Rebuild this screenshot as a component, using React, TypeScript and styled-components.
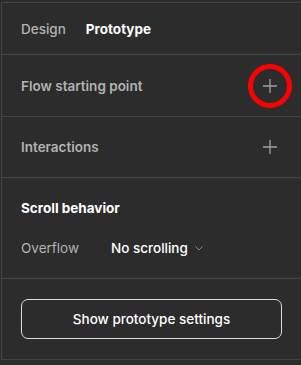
import React from 'react';
import styled, {createGlobalStyle} from 'styled-components';

const COLOR = {
    BG: '#2c2c2c',
    BORDER: '#444444',
    TEXT: '#ffffff',
    MUTED: '#b3b3b3',
    ICON: '#a0a0a0',
};

const GlobalStyle = createGlobalStyle`
    html, body {
        margin: 0;
        padding: 0;
        background: ${COLOR.BG};
    }
    body {
        font-family: Inter, "Noto Sans", sans-serif;
        -webkit-font-smoothing: antialiased;
    }
`;

const Panel = styled.div`
    width: 300px;
    margin: 2px 0 0 1px;
    border-top: 1px solid ${COLOR.BORDER};
    border-left: 1px solid ${COLOR.BORDER};
    background: ${COLOR.BG};
    color: ${COLOR.TEXT};
    font-size: 13.5px;
`;

const Tabs = styled.div`
    display: flex;
    gap: 20px;
    height: 51px;
    padding: 0 19px;
    align-items: center;
    border-bottom: 1px solid ${COLOR.BORDER};
`;

const Tab = styled.span<{ $active?: boolean }>`
    font-weight: ${p => (p.$active ? 700 : 500)};
    color: ${p => (p.$active ? COLOR.TEXT : COLOR.MUTED)};
`;

const Section = styled.div<{ $height: number }>`
    height: ${p => p.$height}px;
    display: flex;
    align-items: center;
    justify-content: space-between;
    padding: 0 19px;
    border-bottom: 1px solid ${COLOR.BORDER};
`;

const SectionTitle = styled.span`
    color: ${COLOR.MUTED};
    font-weight: 600;
`;

const AddButton = styled.button<{ $highlight?: boolean }>`
    position: relative;
    width: 24px;
    height: 24px;
    margin-right: 1px;
    padding: 0;
    border: none;
    background: none;
    display: flex;
    align-items: center;
    justify-content: center;

    &::after {
        content: '';
        display: ${p => (p.$highlight ? 'block' : 'none')};
        position: absolute;
        left: -10px;
        top: -10px;
        width: 34px;
        height: 34px;
        border: 5px solid #ff0000;
        border-radius: 50%;
    }
`;

const ScrollBlock = styled.div`
    padding: 22px 19px 0;
    height: 78px;
    border-bottom: 1px solid ${COLOR.BORDER};
`;

const BlockTitle = styled.div`
    font-weight: 700;
    line-height: 16px;
`;

const Row = styled.div`
    display: flex;
    align-items: center;
    margin-top: 24px;
    line-height: 16px;
`;

const Label = styled.span`
    width: 90px;
    color: ${COLOR.MUTED};
`;

const Select = styled.span`
    display: flex;
    align-items: center;
    gap: 7px;
    font-weight: 500;
`;

const Footer = styled.div`
    padding: 20px 19px;
    border-bottom: 1px solid ${COLOR.BORDER};
`;

const WideButton = styled.button`
    width: 261px;
    height: 40px;
    border: 1px solid #dcdcdc;
    border-radius: 7px;
    background: transparent;
    color: ${COLOR.TEXT};
    font-family: Inter, sans-serif;
    font-size: 13.5px;
    font-weight: 500;
`;

function Plus() {
    return (
        <svg width="14" height="14" viewBox="0 0 14 14">
            <path d="M7 0V14M0 7H14" stroke={COLOR.ICON} strokeWidth="1.3" />
        </svg>
    );
}

function Chevron() {
    return (
        <svg width="8" height="5" viewBox="0 0 8 5">
            <path d="M0.5 0.5L4 4L7.5 0.5" stroke="#8a8a8a" strokeWidth="1" fill="none" />
        </svg>
    );
}

export default function App() {
    return (
        <>
            <GlobalStyle />
            <Panel>
                <Tabs>
                    <Tab>Design</Tab>
                    <Tab $active>Prototype</Tab>
                </Tabs>
                <Section $height={61}>
                    <SectionTitle>Flow starting point</SectionTitle>
                    <AddButton $highlight><Plus /></AddButton>
                </Section>
                <Section $height={60}>
                    <SectionTitle>Interactions</SectionTitle>
                    <AddButton><Plus /></AddButton>
                </Section>
                <ScrollBlock>
                    <BlockTitle>Scroll behavior</BlockTitle>
                    <Row>
                        <Label>Overflow</Label>
                        <Select>No scrolling <Chevron /></Select>
                    </Row>
                </ScrollBlock>
                <Footer>
                    <WideButton>Show prototype settings</WideButton>
                </Footer>
            </Panel>
        </>
    );
}
